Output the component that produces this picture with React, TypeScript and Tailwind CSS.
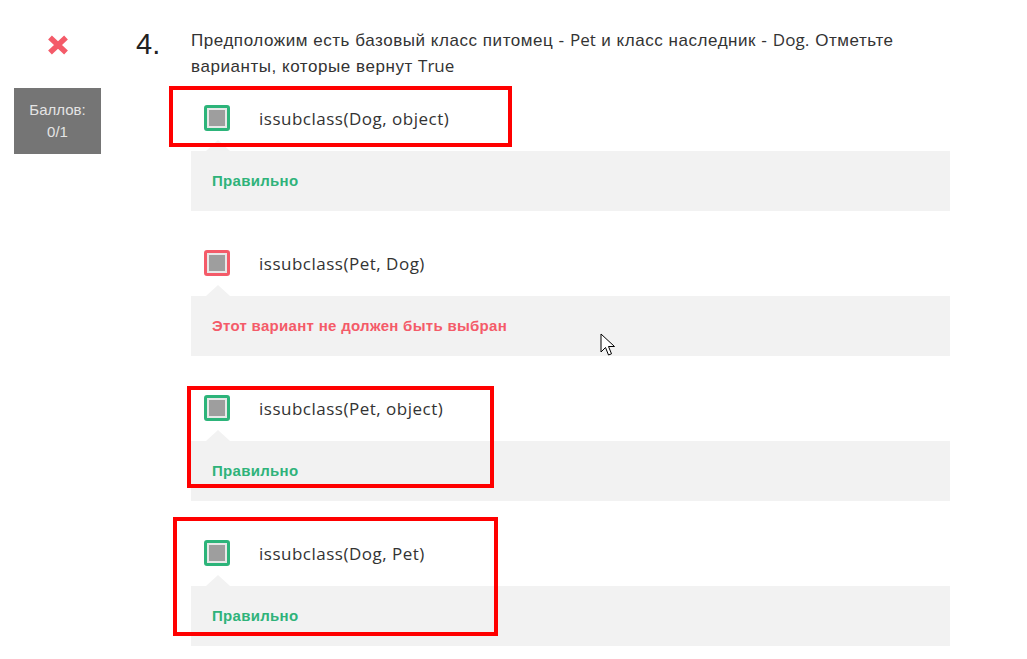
import React from 'react';

type Option = {
  label: string;
  ok: boolean;
  feedback: string;
};

const options: Option[] = [
  { label: 'issubclass(Dog, object)', ok: true, feedback: 'Правильно' },
  { label: 'issubclass(Pet, Dog)', ok: false, feedback: 'Этот вариант не должен быть выбран' },
  { label: 'issubclass(Pet, object)', ok: true, feedback: 'Правильно' },
  { label: 'issubclass(Dog, Pet)', ok: true, feedback: 'Правильно' },
];

function Checkbox({ ok }: { ok: boolean }) {
  return (
    <div
      className={`w-[26px] h-[26px] rounded-[3px] border-[3px] p-[2px] bg-[#e8e8e8] ${
        ok ? 'border-[#2db47a]' : 'border-[#f45b69]'
      }`}
    >
      <div className="w-full h-full bg-[#9e9e9e]" />
    </div>
  );
}

function OptionItem({ option }: { option: Option }) {
  return (
    <div className="flex flex-col">
      <div className="flex items-center h-[26px] pl-[13px]">
        <Checkbox ok={option.ok} />
        <span className="ml-[29px] text-[17px] tracking-[0.5px] text-[#333] font-['Open_Sans',sans-serif] leading-none">
          {option.label}
        </span>
      </div>
      {/* feedback panel with little pointer */}
      <div className="relative mt-[20px] h-[60px] bg-[#f2f2f2] flex items-center pl-[21px]">
        <div className="absolute -top-[11px] left-[15px] w-0 h-0 border-l-[12px] border-r-[12px] border-b-[11px] border-l-transparent border-r-transparent border-b-[#f2f2f2]" />
        <span
          className={`text-[15px] tracking-[0.3px] font-bold font-['Liberation_Sans',Arial,sans-serif] ${
            option.ok ? 'text-[#2fb37a]' : 'text-[#f45b69]'
          }`}
        >
          {option.feedback}
        </span>
      </div>
    </div>
  );
}

export default function App() {
  return (
    <div className="relative w-[1027px] h-[659px] bg-white overflow-hidden font-['Liberation_Sans',Arial,sans-serif] text-[#333]">
      <div className="flex">
        {/* status column */}
        <div className="w-[87px] ml-[14px] flex flex-col items-center pt-[35px]">
          <svg width="22" height="20" viewBox="0 0 22 20">
            <path d="M3 2.5 L19 17.5 M19 2.5 L3 17.5" stroke="#f45b69" strokeWidth="5.5" strokeLinecap="butt" />
          </svg>
          <div className="mt-[33px] w-[87px] h-[66px] bg-[#757575] text-[#e4e4e4] text-[15px] leading-[22px] flex flex-col items-center justify-center">
            <span>Баллов:</span>
            <span>0/1</span>
          </div>
        </div>

        {/* number */}
        <div className="ml-[35px] w-[55px] pt-[28px] text-[29px] leading-[32px] text-[#222]">
          4.
        </div>

        {/* question */}
        <div className="w-[759px] pt-[27px]">
          <p className="w-[720px] text-[17px] tracking-[0.55px] leading-[25px] text-[#333]">
            Предположим есть базовый класс питомец - <span className="font-['Open_Sans',sans-serif] tracking-normal">Pet</span> и класс наследник -{' '}
            <span className="font-['Open_Sans',sans-serif] tracking-normal">Dog</span>. Отметьте варианты, которые вернут{' '}
            <span className="font-['Open_Sans',sans-serif] tracking-normal">True</span>
          </p>
          <div className="mt-[26px] flex flex-col gap-[39px]">
            {options.map((o) => (
              <OptionItem key={o.label} option={o} />
            ))}
          </div>
        </div>
      </div>

      {/* annotation rectangles drawn over the page */}
      <div className="absolute left-[169px] top-[86px] w-[343px] h-[61px] border-[4px] border-[#ff0000]" />
      <div className="absolute left-[187px] top-[386px] w-[307px] h-[102px] border-[4px] border-[#ff0000]" />
      <div className="absolute left-[173px] top-[517px] w-[325px] h-[119px] border-[4px] border-[#ff0000]" />

      {/* mouse cursor */}
      <svg className="absolute left-[600px] top-[333px]" width="18" height="26" viewBox="0 0 18 26">
        <path
          d="M1 1 L1 19 L5.5 14.5 L8.5 22 L11.5 20.8 L8.5 13.5 L14.5 13.5 Z"
          fill="#fff"
          stroke="#000"
          strokeWidth="1"
          strokeLinejoin="miter"
        />
      </svg>
    </div>
  );
}
